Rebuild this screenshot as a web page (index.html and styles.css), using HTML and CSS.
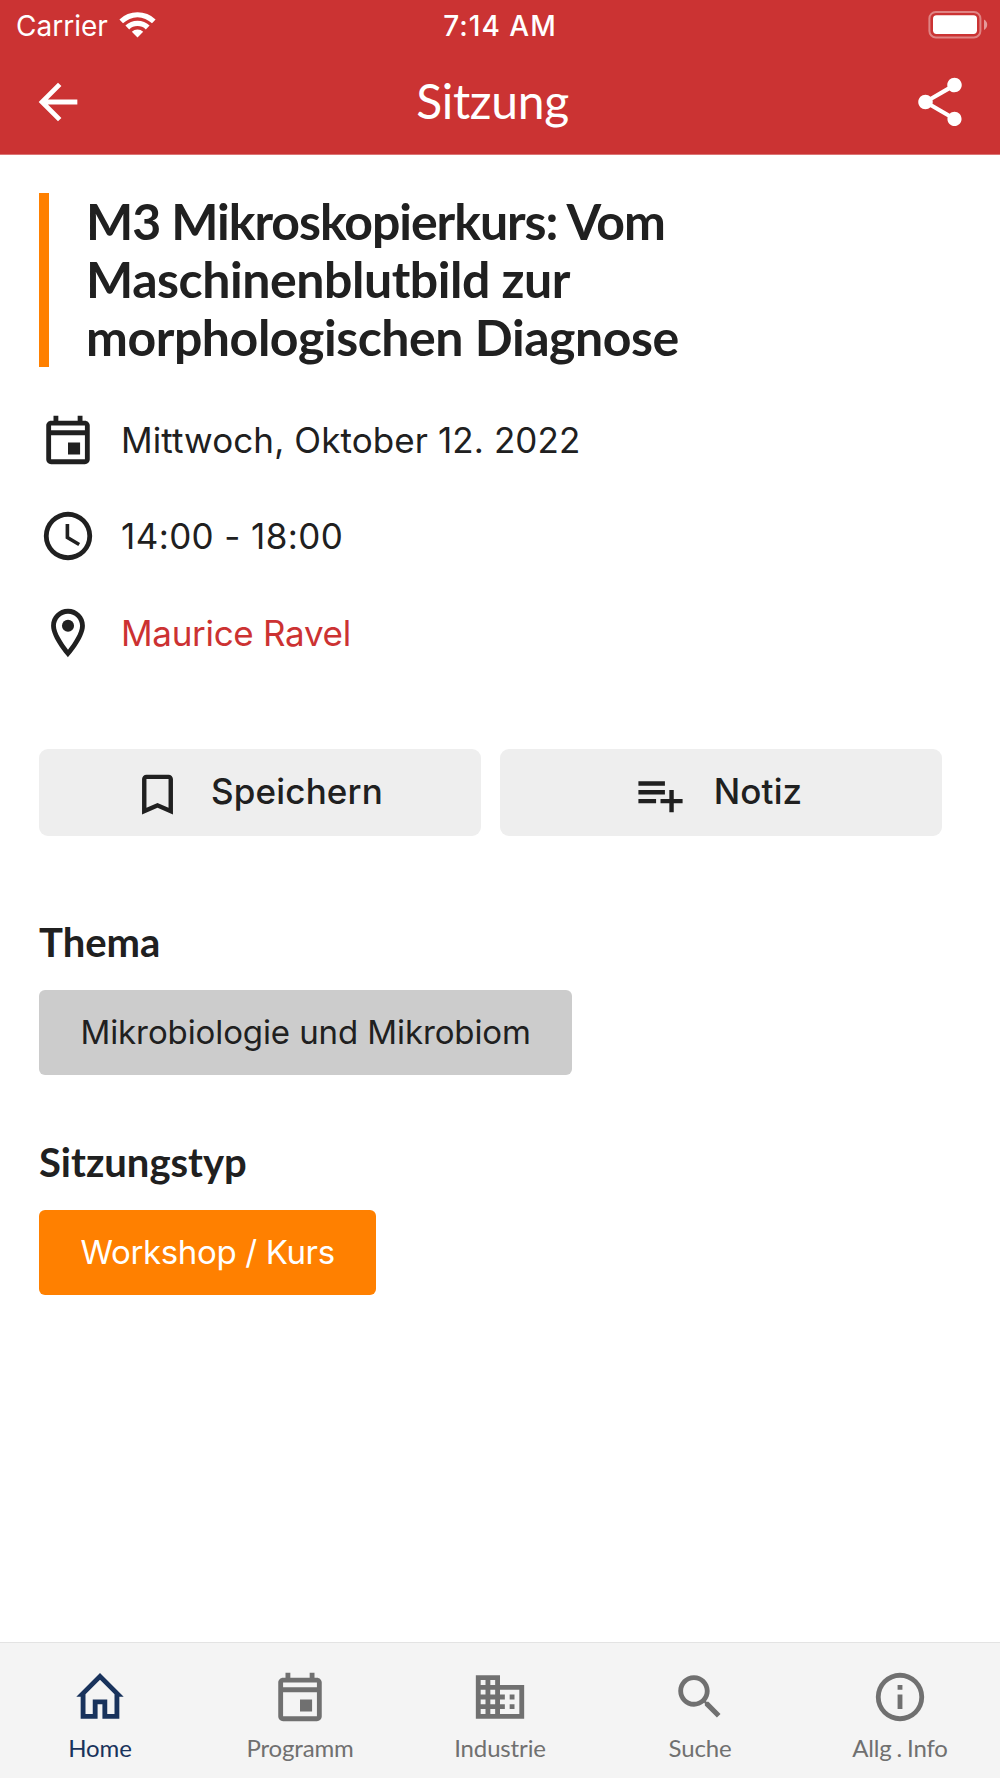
FILE: index.html
```html
<!DOCTYPE html>
<html lang="de">
  <head>
    <meta charset="UTF-8" />
    <meta name="viewport" content="width=device-width, initial-scale=1.0" />
    <title>Sitzung</title>
    <link rel="stylesheet" href="styles.css">
  </head>
  <body>
    <header class="header">
      <div class="status-bar">
        <div class="status-carrier">
          <span>Carrier</span>
          <svg class="wifi" viewBox="0 0 37 28">
            <path d="M0.4 9.6a25.8 25.8 0 0 1 36.2 0l-3.6 3.7a20.6 20.6 0 0 0-29 0z" />
            <path d="M6.4 15.6a17.3 17.3 0 0 1 24.2 0l-3.8 3.8a12 12 0 0 0-16.6 0z" />
            <path d="M12.8 21.7a8.4 8.4 0 0 1 11.4 0L18.5 27.4z" />
          </svg>
        </div>
        <span class="status-time">7:14 AM</span>
        <svg class="battery" viewBox="0 0 60 28">
          <rect class="battery-case" x="1.4" y="1" width="51" height="25.4" rx="6.5" />
          <rect x="5" y="4.3" width="44" height="18.6" rx="3.6" />
          <path class="battery-cap" d="M56 8.5c2 1 3.2 3 3.2 5.2S58 17.900 56 18.900z" />
        </svg>
      </div>
      <div class="toolbar">
        <svg class="icon" viewBox="0 0 24 24">
          <path d="M20 11H7.830l5.590-5.590L12 4l-8 8 8 8 1.410-1.410L7.830 13H20z" />
        </svg>
        <h1>Sitzung</h1>
        <svg class="icon" viewBox="0 0 24 24">
          <path d="M18 16.080c-.76 0-1.440.3-1.960.77L8.910 12.700c.05-.23.09-.46.09-.7s-.04-.47-.09-.7l7.050-4.110c.54.5 1.250.81 2.040.81 1.660 0 3-1.340 3-3s-1.340-3-3-3-3 1.340-3 3c0 .24.04.47.09.7L8.040 9.810C7.500 9.310 6.790 9 6 9c-1.660 0-3 1.340-3 3s1.340 3 3 3c.79 0 1.500-.31 2.040-.81l7.120 4.160c-.05.21-.08.43-.08.65 0 1.610 1.310 2.920 2.920 2.920s2.920-1.310 2.920-2.920-1.310-2.920-2.920-2.920z" />
        </svg>
      </div>
    </header>

    <main class="session">
      <div class="session-title">
        <h2><span>M3 Mikroskopierkurs: Vom</span><br>Maschinenblutbild zur<br>morphologischen Diagnose</h2>
      </div>

      <ul class="details">
        <li>
          <svg class="icon" viewBox="0 0 24 24">
            <path d="M19 4h-1V2h-2v2H8V2H6v2H5c-1.110 0-2 .9-2 2v14c0 1.100.89 2 2 2h14c1.100 0 2-.9 2-2V6c0-1.100-.9-2-2-2zm0 16H5V10h14v10zm0-12H5V6h14v2zm-7 5h5v5h-5z" />
          </svg>
          <span>Mittwoch, Oktober 12. 2022</span>
        </li>
        <li>
          <svg class="icon" viewBox="0 0 24 24">
            <path d="M12 2a10 10 0 1 0 0 20 10 10 0 0 0 0-20zm0 18a8 8 0 1 1 0-16 8 8 0 0 1 0 16zm.5-13H11v6l5.250 3.150.75-1.230-4.500-2.670z" />
          </svg>
          <span class="details-time">14:00 - 18:00</span>
        </li>
        <li>
          <svg class="icon" viewBox="0 0 24 24">
            <path d="M12 2C8.130 2 5 5.130 5 9c0 5.250 7 13 7 13s7-7.750 7-13c0-3.870-3.130-7-7-7zM7 9c0-2.760 2.240-5 5-5s5 2.240 5 5c0 2.880-2.880 7.190-5 9.880C9.920 16.210 7 11.850 7 9z" />
            <circle cx="12" cy="9" r="2.500" />
          </svg>
          <a href="#">Maurice Ravel</a>
        </li>
      </ul>

      <div class="actions">
        <button>
          <svg viewBox="0 0 24 24">
            <path d="M17 3H7c-1.100 0-1.990.9-1.990 2L5 21l7-3 7 3V5c0-1.100-.9-2-2-2zm0 15l-5-2.180L7 18V5h10v13z" />
          </svg>
          Speichern
        </button>
        <button>
          <svg viewBox="0 0 24 24">
            <path d="M14 10H2v2h12v-2zm0-4H2v2h12V6zm4 8v-4h-2v4h-4v2h4v4h2v-4h4v-2h-4zM2 16h8v-2H2v2z" />
          </svg>
          Notiz
        </button>
      </div>

      <section>
        <h3>Thema</h3>
        <span class="tag">Mikrobiologie und Mikrobiom</span>
      </section>
      <section>
        <h3>Sitzungstyp</h3>
        <span class="tag tag-type">Workshop / Kurs</span>
      </section>
    </main>

    <nav class="tabs">
      <a href="#" class="active">
        <svg class="icon" viewBox="0 0 24 24">
          <path d="M12 2.100L21.800 11.900H20V21h-7v-6h-2v6H4v-9.100H2.200zM12 4.900l-6 6V19h3v-6h6v6h3v-8.100z" />
        </svg>
        Home
      </a>
      <a href="#">
        <svg class="icon" viewBox="0 0 24 24">
          <path d="M19 4h-1V2h-2v2H8V2H6v2H5c-1.110 0-2 .9-2 2v14c0 1.100.89 2 2 2h14c1.100 0 2-.9 2-2V6c0-1.100-.9-2-2-2zm0 16H5V10h14v10zm0-12H5V6h14v2zm-7 5h5v5h-5z" />
        </svg>
        Programm
      </a>
      <a href="#">
        <svg class="icon" viewBox="0 0 24 24">
          <path d="M12 7V3H2v18h20V7H12zM6 19H4v-2h2v2zm0-4H4v-2h2v2zm0-4H4V9h2v2zm0-4H4V5h2v2zm4 12H8v-2h2v2zm0-4H8v-2h2v2zm0-4H8V9h2v2zm0-4H8V5h2v2zm10 12h-8v-2h2v-2h-2v-2h2v-2h-2V9h8v10zm-2-8h-2v2h2v-2zm0 4h-2v2h2v-2z" />
        </svg>
        Industrie
      </a>
      <a href="#">
        <svg class="icon" viewBox="0 0 24 24">
          <path d="M15.500 14h-.79l-.28-.27C15.410 12.590 16 11.110 16 9.500 16 5.910 13.090 3 9.500 3S3 5.910 3 9.500 5.910 16 9.500 16c1.610 0 3.090-.59 4.230-1.570l.27.28v.79l5 4.990L20.490 19l-4.990-5zm-6 0C7.010 14 5 11.990 5 9.500S7.010 5 9.500 5 14 7.010 14 9.500 11.990 14 9.500 14z" />
        </svg>
        Suche
      </a>
      <a href="#">
        <svg class="icon" viewBox="0 0 24 24">
          <path d="M11 7h2v2h-2zm0 4h2v6h-2zm1-9a10 10 0 1 0 0 20 10 10 0 0 0 0-20zm0 18a8 8 0 1 1 0-16 8 8 0 0 1 0 16z" />
        </svg>
        Allg . Info
      </a>
    </nav>
  </body>
</html>
```

FILE: styles.css
```css
/* Reset CSS */
* {
  box-sizing: border-box;
}

body {
  display: flex;
  flex-direction: column;
  height: 1778px;
  margin: 0;
  background-color: #fff;
  color: #202020;
  font-family: Inter, 'Liberation Sans', sans-serif;
}

/* Elements */
h1,
h2,
h3 {
  margin: 0;
  font-family: Lato, 'Open Sans', sans-serif;
}

a {
  color: #cc3232;
  text-decoration: none;
}

svg {
  display: block;
  flex: none;
  fill: currentColor;
}

.icon {
  width: 58px;
  height: 58px;
}

/* Header */
.header {
  height: 155px;
  border-bottom: 1px solid #dc7474;
  background-color: #cb3333;
  color: #fff;
}

.status-bar {
  display: grid;
  grid-template-columns: 1fr auto 1fr;
  align-items: center;
  height: 51px;
  padding: 0 12px 0 16px;
  font-size: 28px;
}

.status-carrier {
  display: flex;
  align-items: center;
  gap: 11px;
}

.wifi {
  width: 37px;
  height: 28px;
  margin-bottom: 3px;
}

.status-time {
  margin-right: 4px;
  font-weight: 500;
  letter-spacing: 1px;
}

.battery {
  justify-self: end;
  width: 60px;
  height: 28px;
  margin-bottom: 2px;
}

.battery-case {
  fill: none;
  stroke: #fff;
  stroke-opacity: 0.4;
  stroke-width: 2;
}

.battery-cap {
  fill-opacity: 0.5;
}

.toolbar {
  display: flex;
  align-items: center;
  justify-content: space-between;
  height: 101px;
  padding: 0 31px 0 29px;
}

.toolbar h1 {
  margin-right: 13px;
  padding-bottom: 2px;
  font-size: 48px;
  font-weight: 400;
  letter-spacing: -0.3px;
}

/* Session */
.session {
  flex: 1;
  padding: 38px 58px 0 39px;
}

.session-title {
  display: flex;
  height: 174px;
  padding-left: 37px;
  border-left: 10px solid #ff8000;
}

.session-title h2 {
  margin-top: -1px;
  font-size: 50px;
  line-height: 58px;
  letter-spacing: -0.45px;
}

.session-title h2 span {
  letter-spacing: -1.05px;
}

.details {
  display: flex;
  flex-direction: column;
  gap: 38.7px;
  margin: 43.7px 0 87px;
  padding: 0;
  list-style: none;
  font-size: 35px;
  letter-spacing: 0.1px;
}

.details li {
  display: flex;
  align-items: center;
  gap: 24px;
}

.details-time {
  letter-spacing: 0.4px;
}

.details a {
  letter-spacing: -0.3px;
}

.actions {
  display: flex;
  gap: 19px;
  margin-bottom: 82px;
}

.actions button {
  display: flex;
  flex: 1;
  align-items: center;
  justify-content: center;
  gap: 27px;
  height: 87px;
  padding: 0 6px 3px 0;
  border: 0;
  border-radius: 9px;
  background-color: #eee;
  color: inherit;
  font: inherit;
  font-size: 35px;
  font-weight: 500;
  letter-spacing: 0.15px;
}

.actions svg {
  width: 53px;
  height: 53px;
  margin-top: 7px;
}

.session section {
  margin-bottom: 63px;
}

.session h3 {
  margin-bottom: 24px;
  font-size: 40px;
  line-height: 48px;
}

.tag {
  display: block;
  width: fit-content;
  height: 85px;
  padding: 0 41.5px;
  border-radius: 6px;
  background-color: #ccc;
  font-size: 33px;
  line-height: 85px;
  letter-spacing: -0.1px;
}

.tag-type {
  background-color: #ff8000;
  color: #fff;
  letter-spacing: -0.35px;
}

/* Tab bar */
.tabs {
  display: flex;
  height: 136px;
  padding-top: 25px;
  border-top: 1px solid #e3e3e3;
  background-color: #f4f4f4;
  font-family: Lato, 'Open Sans', sans-serif;
  font-size: 24px;
  line-height: 30px;
  letter-spacing: -0.15px;
  word-spacing: -1px;
}

.tabs a {
  display: flex;
  flex: 1;
  flex-direction: column;
  align-items: center;
  gap: 7px;
  color: #707070;
}

.tabs .active {
  color: #19335c;
}
```
